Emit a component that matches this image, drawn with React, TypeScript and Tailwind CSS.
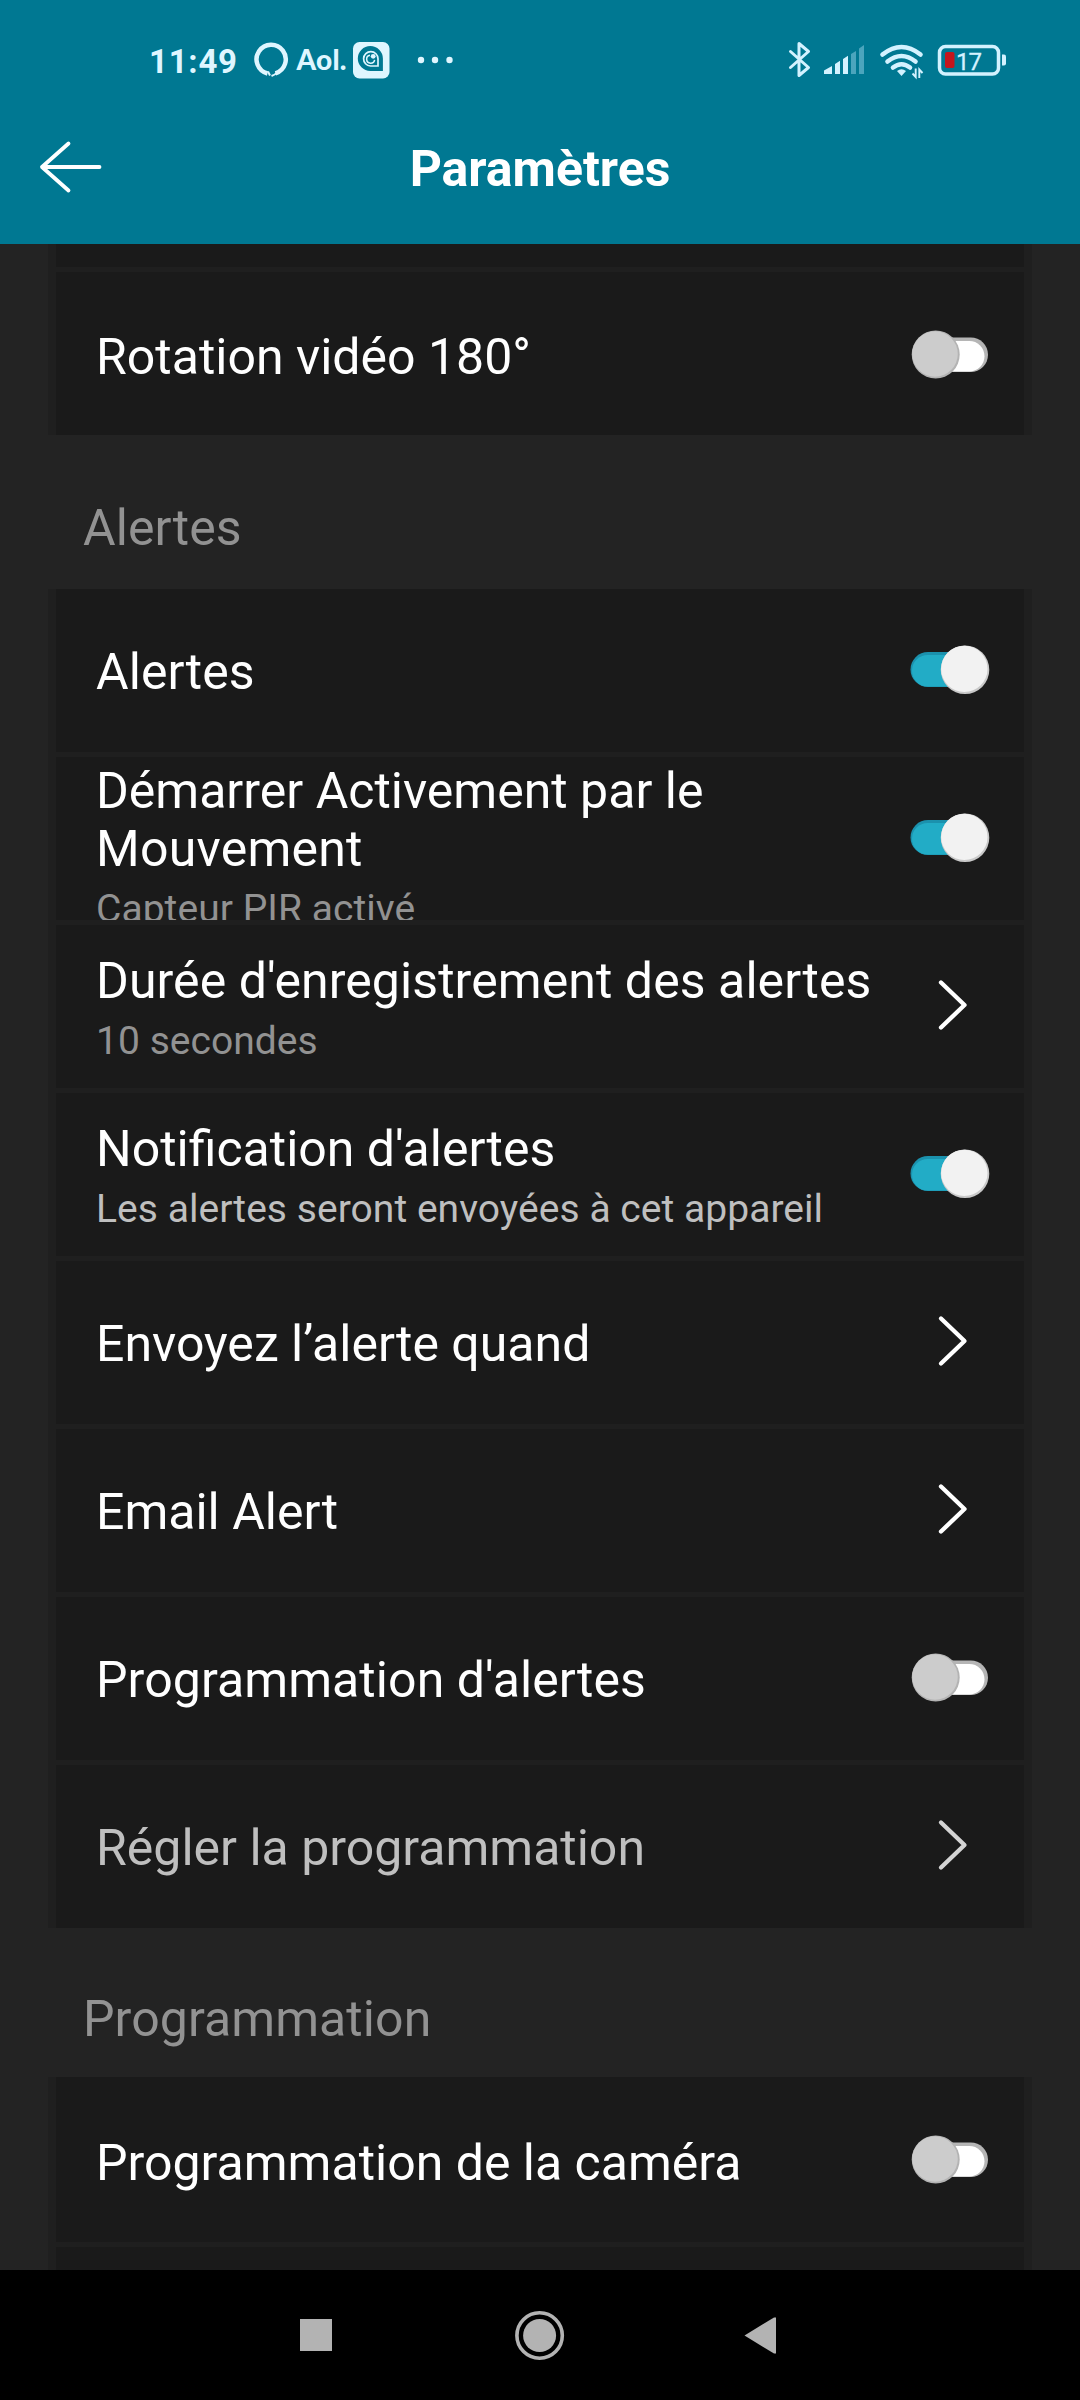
import type { ReactNode } from "react";

function StatusIcons() {
  return (
    <svg className="h-[80px] w-[250px]" viewBox="770 20 250 80" fill="none">
      <path d="M790.5 51.5 808.5 67.5 799 75.5V43.5L808.5 51.5 790.5 67.5" stroke="#d3f2ff" strokeWidth="3" strokeLinejoin="round" strokeLinecap="round" />
      <path d="M824 74v-3.5l8-4.5v8zM835 74V64l5-3.2V74zM843 74V59l5-3.2V74z" fill="#d3f2ff" />
      <path d="M851 74V54l5-3v23zM859 74V48.500l5-3.500v29z" fill="#4ba5bd" />
      <path d="M882.500 54.500Q901.500 39.500 920.500 54.500M887.500 61.500Q901.500 50.500 915.500 61.500M893 67.500Q901.500 61 910 67.500" stroke="#d3f2ff" strokeWidth="4.600" strokeLinecap="round" />
      <path d="M897 71q4.500-3.500 9 0l-4.500 5z" fill="#d3f2ff" />
      <path d="M915.700 68.500v8.500l-3.200-3.500M919.300 78v-8.500l3.200 3.500" stroke="#d3f2ff" strokeWidth="1.900" />
      <rect x="939.500" y="46.500" width="59" height="27.500" rx="6" stroke="#d3f2ff" strokeWidth="3.500" />
      <rect x="945" y="52" width="9.500" height="16" rx="2" fill="#c4161c" />
      <path d="M1002 54.500h2q2 0 2 2v7q0 2-2 2h-2z" fill="#d3f2ff" />
      <text x="956" y="69.500" fill="#d3f2ff" stroke="#d3f2ff" strokeWidth="0.300" fontFamily="Roboto, sans-serif" fontSize="24" fontWeight="400" textLength="26">17</text>
    </svg>
  );
}

function NotificationIcons() {
  return (
    <svg className="h-[80px] w-[320px]" viewBox="140 20 320 80" fill="none">
      <text x="149" y="72.500" fill="#dff6ff" fontFamily="Roboto, sans-serif" fontSize="33" fontWeight="700" textLength="88">11:49</text>
      <path d="M267.500 73.500A14.600 14.600 0 1 1 275.500 73.300" stroke="#dff6ff" strokeWidth="4.500" />
      <path d="M268 71.500l2 4M271.500 76q4-1.500 6-4" stroke="#dff6ff" strokeWidth="2" />
      <text x="296.500" y="69.800" fill="#dff6ff" fontFamily="Lato, sans-serif" fontSize="28" fontWeight="900" textLength="50">Aol.</text>
      <rect x="353" y="42" width="36.500" height="36.500" rx="6.500" fill="#dff6ff" />
      <path d="M370.300 46a12.600 12.600 0 0 1 12.600 12.600V71H370.300a12.500 12.500 0 0 1 0-25z" fill="#007892" />
      <path d="M378 66H370.500a7.200 7.200 0 1 1 7.500-7.200z" stroke="#dff6ff" strokeWidth="1.700" />
      <path d="M370 55.200a4 4 0 1 0 4.600 4.600" stroke="#dff6ff" strokeWidth="1.500" />
      <circle cx="373.200" cy="56.300" r="2.400" fill="#dff6ff" />
      <g fill="#dff6ff">
        <circle cx="421" cy="60" r="3.200" />
        <circle cx="435" cy="60" r="3.200" />
        <circle cx="449.500" cy="60" r="3.200" />
      </g>
    </svg>
  );
}

function Toggle({ on = false }: { on?: boolean }) {
  return (
    <svg className="-mt-[2px] h-[54px] w-[84px] shrink-0" viewBox="0 0 84 54" role="switch" aria-checked={on}>
      {on ? (
        <>
          <rect x="2.500" y="9" width="70" height="35" rx="17.500" fill="#1b91ad" />
          <rect x="4" y="12" width="68" height="31.500" rx="15.700" fill="#22acc6" />
          <circle cx="57" cy="26.700" r="24.300" fill="#c9c9c9" />
          <circle cx="56.300" cy="25.900" r="23.200" fill="#f2f2f2" />
        </>
      ) : (
        <>
          <rect x="20" y="9.500" width="60" height="34.500" rx="17.200" fill="#b5b5b5" />
          <rect x="20" y="13" width="56.500" height="30.500" rx="15.200" fill="#fff" />
          <circle cx="27.700" cy="26.500" r="24" fill="#b3b3b3" />
          <circle cx="27" cy="26" r="22.800" fill="#cccccc" />
        </>
      )}
    </svg>
  );
}

function Chevron({ dim = false }: { dim?: boolean }) {
  return (
    <svg className="-mt-[3px] mr-[24px] h-[54px] w-[32px] shrink-0" viewBox="0 0 32 54" fill="none">
      <path d="M5 4.500 28.500 27 5 49.500" stroke={dim ? "#d4d4d4" : "#fff"} strokeWidth="4.300" strokeLinecap="round" strokeLinejoin="round" />
    </svg>
  );
}

type RowProps = {
  title: ReactNode;
  sub?: string;
  subTone?: string;
  dim?: boolean;
  top?: boolean;
  wide?: boolean;
  size?: string;
  control: ReactNode;
};

function Row({ title, sub, subTone = "text-[#929292]", dim, top, wide, size = "h-[163px]", control }: RowProps) {
  return (
    <div className={`flex items-center justify-between overflow-hidden bg-[#1a1a1a] pr-[32px] pl-[40px] ${size}`}>
      <div className={top ? "self-start pt-[5px]" : "pt-[3px]"}>
        <div
          className={`text-[50px] leading-[58px] whitespace-nowrap ${wide ? "tracking-[0.08px]" : ""} ${dim ? "text-[#bfbfbf]" : "text-white"}`}
        >
          {title}
        </div>
        {sub && <div className={`mt-[8px] text-[39px] leading-[46px] tracking-[0.04px] whitespace-nowrap ${subTone}`}>{sub}</div>}
      </div>
      {control}
    </div>
  );
}

function Card({ children }: { children: ReactNode }) {
  return (
    <div className="mx-[48px] flex shrink-0 flex-col gap-[5px] border-x-8 border-[#1f1f1f] bg-[#1f1f1f]">{children}</div>
  );
}

export default function App() {
  return (
    <div className="flex h-[2400px] w-[1080px] flex-col overflow-hidden bg-[#232323] font-['Roboto',sans-serif]">
      <header className="flex h-[244px] shrink-0 flex-col bg-[#007892]">
        <div className="mt-[20px] flex h-[80px] justify-between pr-[60px] pl-[140px]">
          <NotificationIcons />
          <StatusIcons />
        </div>
        <div className="grid h-[134px] grid-cols-[1fr_auto_1fr] items-center px-[38px]">
          <svg className="h-[54px] w-[68px]" viewBox="38 140 68 54" fill="none">
            <path d="M68.500 143.500 42 167l26.500 23.500M42 167h57.500" stroke="#fff" strokeWidth="3.800" strokeLinecap="round" strokeLinejoin="round" />
          </svg>
          <h1 className="pt-[3px] text-[50px] leading-[58px] font-bold text-white">Paramètres</h1>
        </div>
      </header>

      <main className="flex h-[2026px] shrink-0 flex-col overflow-hidden">
        <Card>
          <div className="h-[23px] bg-[#1a1a1a]" />
          <Row size="h-[163px] pt-[4px]" title="Rotation vidéo 180°" control={<Toggle />} />
        </Card>
        <h2 className="h-[154px] shrink-0 pt-[64px] pl-[83px] text-[50px] leading-[58px] tracking-[0.08px] text-[#929292]">Alertes</h2>
        <Card>
          <Row wide title="Alertes" control={<Toggle on />} />
          <Row
            top
            title={
              <>
                Démarrer Activement par le
                <br />
                <span className="tracking-[0.25px]">Mouvement</span>
              </>
            }
            sub="Capteur PIR activé"
            control={<Toggle on />}
          />
          <Row wide title="Durée d'enregistrement des alertes" sub="10 secondes" control={<Chevron />} />
          <Row title="Notification d'alertes" sub="Les alertes seront envoyées à cet appareil" subTone="text-[#bfbfbf]" control={<Toggle on />} />
          <Row title="Envoyez l’alerte quand" control={<Chevron />} />
          <Row title="Email Alert" control={<Chevron />} />
          <Row wide title="Programmation d'alertes" control={<Toggle />} />
          <Row dim title="Régler la programmation" control={<Chevron dim />} />
        </Card>
        <h2 className="h-[149px] shrink-0 pt-[62px] pl-[83px] text-[50px] leading-[58px] tracking-[0.08px] text-[#929292]">Programmation</h2>
        <Card>
          <Row size="h-[165px] pt-[3px]" title="Programmation de la caméra" control={<Toggle />} />
          <div className="h-[24px] bg-[#1a1a1a]" />
        </Card>
      </main>

      <nav className="flex h-[130px] shrink-0 items-center justify-between bg-black pr-[304px] pl-[300px]">
        <svg className="h-[52px] w-[476px]" viewBox="300 2309 476 52" fill="#b3b3b3">
          <rect x="300" y="2319" width="32" height="32" />
          <circle cx="539.600" cy="2335.500" r="16.500" />
          <circle cx="539.600" cy="2335.500" r="22.700" fill="none" stroke="#b3b3b3" strokeWidth="3.600" />
          <path d="M744.500 2335.500 774 2317.500h2v36h-2z" />
        </svg>
      </nav>
    </div>
  );
}
